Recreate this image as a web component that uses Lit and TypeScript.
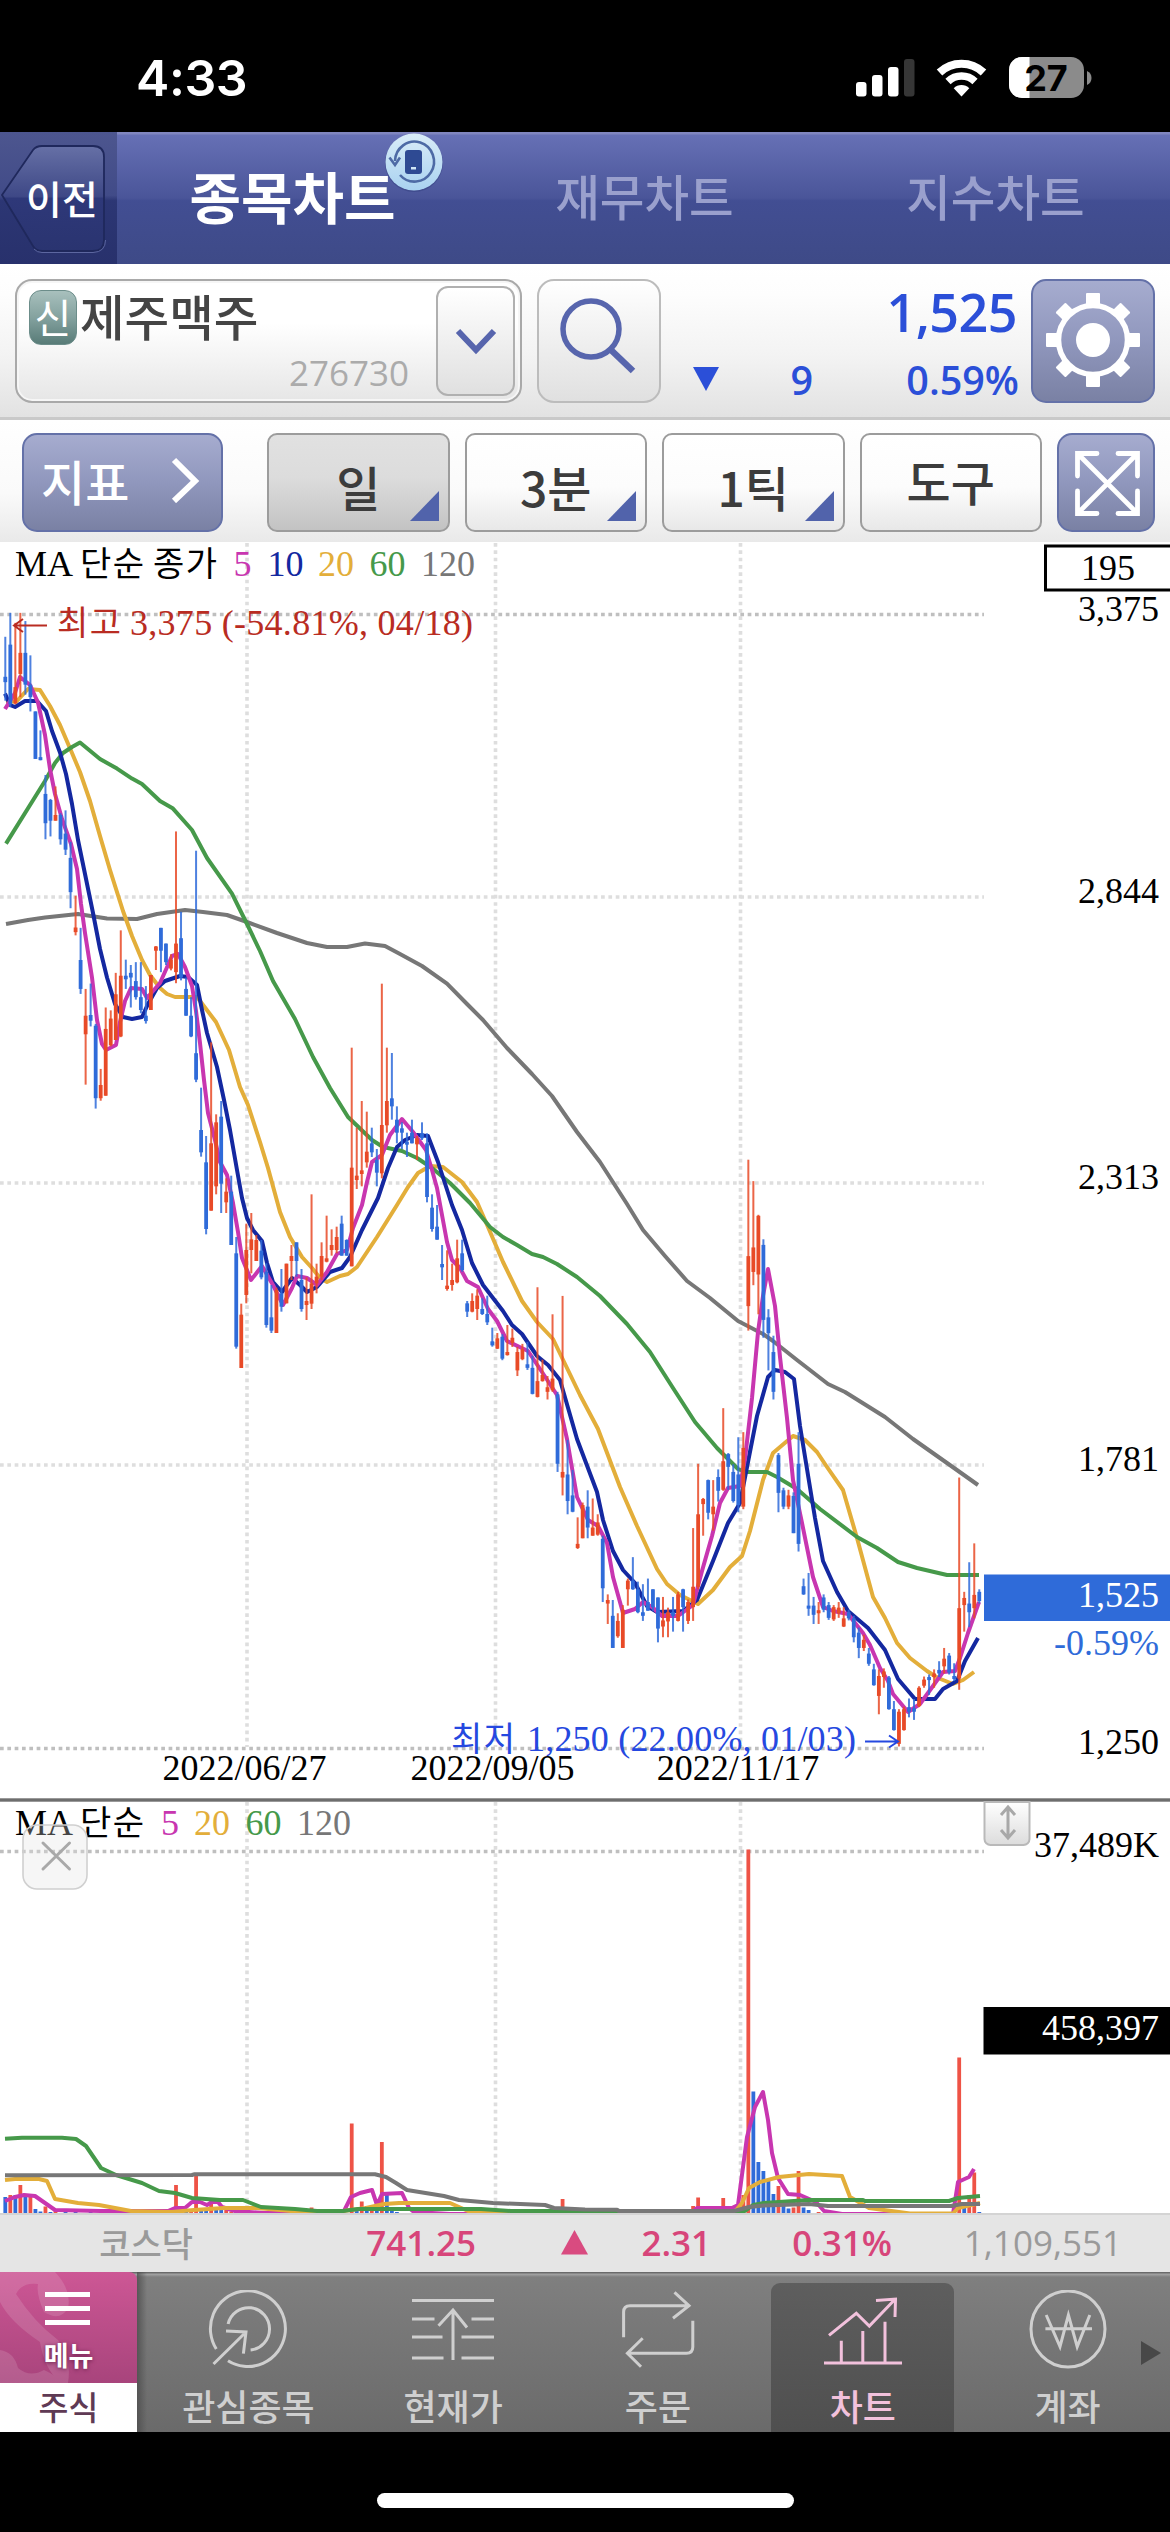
import { LitElement, html, svg, css } from "lit";
import { customElement } from "lit/decorators.js";

const RED = "#e84a27";
const BLUE = "#2f6bd9";
const COLORS = { m5: "#c836b0", m10: "#1428a0", m20: "#e3ae3a", m60: "#46994a", m120: "#777777" };

// One bar: direction (r = up, b = down), high, body top, body bottom, low.
// Bars come in three runs; each run has its own origin and unit.
const RUNS = [
  {
    top: 540,
    unit: 2.8,
    bars:
      "b271,383,398,450 b204,293,460,468 r232,412,458,460 r204,316,375,440 b227,316,405,433 b323,405,440,480 b480,480,613,613 b533,608,614,617 b658,711,793,838 b725,728,786,830 r690,770,786,786 b765,770,838,853 b757,822,867,882 b845,890,986,1031 r996,1085,1098,1107 b1086,1176,1257,1271 r1257,1332,1384,1525 b1242,1330,1346,1362 b1355,1360,1563,1592 r1481,1526,1563,1570 r1309,1369,1556,1556 r1317,1340,1415,1418 r1212,1272,1400,1400 r1093,1220,1390,1392 b1175,1220,1230,1257 b1190,1212,1225,1309 b1182,1235,1280,1287 b1182,1280,1316,1325 b1249,1332,1347,1354 r1218,1218,1316,1316 r1137,1138,1150,1204 b1086,1086,1150,1210 b1130,1130,1182,1190 r1160,1175,1200,1205 r816,1130,1210,1241 b1041,1115,1225,1233 b1225,1257,1332,1332 b1280,1332,1390,1392 b870,1437,1511,1518",
  },
  {
    top: 1000,
    unit: 3,
    bars:
      "b263,390,457,470 b408,487,687,703 r127,430,632,632 r343,367,559,583 b303,350,551,639 r535,575,607,639 b527,575,735,735 b711,760,1040,1046 r911,944,1104,1104 r671,750,885,910 r639,718,750,820 r705,720,783,783 b720,752,832,838 b790,815,975,983 b855,952,992,999 r863,870,999,999 b807,880,920,935 r791,791,910,910 r735,768,783,840 b727,727,783,830 b807,840,927,935 r832,903,915,960 r583,850,911,927 r791,830,850,880 r727,768,830,840 r647,775,785,787 r688,735,750,767 r680,711,750,760 b647,671,767,767 b718,720,767,767 r143,503,799,799 r383,527,540,567 r303,511,522,559 r335,455,487,503 b383,430,457,471 b447,480,518,559 r-49,375,520,535 r143,303,376,398 b159,295,319,359 b319,359,398,430 b367,385,398,447 b398,425,430,471 b359,398,430,430 r408,415,433,480 b367,400,415,420 b400,430,591,607 b583,623,687,695 b615,680,719,719 b735,792,802,840 r751,857,867,872 r791,840,855,872 r719,775,847,850 b719,760,810,815 b903,910,935,951 r880,903,935,937 r868,887,927,960 b895,927,942,945 b887,942,967,975 b983,1024,1036,1040 r999,1015,1046,1047",
  },
  {
    top: 1000,
    unit: 1.96,
    bars:
      "b655,660,703,706 r637,690,696,697 r644,662,672,680 r680,690,726,737 r674,685,704,706 b670,714,721,725 b697,721,772,773 r563,747,778,779 r705,735,747,748 r737,759,768,783 r616,742,765,768 b768,773,909,925 r580,925,936,971 b862,930,982,1008 b921,971,1003,1004 r1014,1066,1074,1076 r985,990,1055,1055 b961,993,1034,1055 r977,1034,1050,1050 r1008,1024,1048,1050 b1050,1056,1153,1180 r1165,1176,1183,1223 b1176,1207,1270,1270 r1202,1217,1247,1250 r1186,1195,1270,1270 r1134,1138,1155,1187 b1092,1138,1155,1156 b1140,1155,1200,1202 b1145,1200,1207,1217 b1134,1180,1197,1197 b1155,1155,1190,1197 b1171,1171,1232,1259 r1170,1216,1228,1249 r1191,1200,1218,1249 b1170,1200,1207,1238 r1160,1165,1217,1218 b1154,1155,1190,1238 r1175,1180,1217,1223 r1035,1150,1190,1217 r909,1008,1150,1155 r976,978,988,1050 b940,941,1005,1018 r941,993,1008,1040 b920,935,962,983 r800,904,960,962 b888,890,915,960 b910,925,982,985 b857,930,990,1004 r847,878,993,998 r313,502,600,648 r355,485,533,559 r421,423,538,616 b469,480,627,662 b606,622,653,726 b658,690,768,783 b888,892,966,1004 b956,961,993,998 r960,971,993,998 b965,972,1045,1045 b847,909,1066,1081 b1134,1149,1165,1166 b1123,1187,1193,1207 b1170,1187,1205,1223 r1180,1196,1202,1223 b1165,1171,1195,1200 b1180,1186,1211,1215 r1186,1190,1214,1217 r1180,1191,1202,1211 r1190,1212,1228,1229 b1195,1200,1212,1216 b1207,1212,1249,1259 b1230,1240,1270,1290 r1244,1254,1270,1276 b1270,1281,1301,1305 b1301,1312,1343,1344 r1312,1325,1364,1400 r1310,1316,1327,1348 b1325,1328,1390,1391 b1374,1390,1431,1432 r1390,1395,1458,1463 r1385,1390,1431,1432 b1369,1386,1395,1406 b1370,1388,1395,1411 r1345,1348,1384,1386 r1326,1332,1344,1348 b1322,1327,1333,1362 r1312,1320,1327,1348 b1296,1313,1320,1327 r1270,1291,1306,1320 b1280,1285,1318,1322 b1300,1325,1330,1335 r936,1192,1330,1352 r1160,1172,1186,1238 b1102,1183,1200,1229 r1065,1166,1192,1212 b1155,1160,1178,1183",
  },
];

const barX = (i: number) => 5.3 + i * 5.0205;

interface Candle { x: number; up: boolean; high: number; top: number; bottom: number; low: number }

const CANDLES: Candle[] = RUNS.flatMap((run) =>
  run.bars.split(" ").map((s) => {
    const [high, top, bottom, low] = s.slice(1).split(",").map((v) => run.top + Number(v) / run.unit);
    return { x: 0, up: s[0] === "r", high, top, bottom, low };
  })
).map((c, i) => ({ ...c, x: barX(i) }));

// Volume bars: index, direction, y of the bar's top. Base line is y = 2213.
const VOLUME_BASE = 2213;
const VOLUMES: [number, string, number][] = [
  [0, "b", 2197], [1, "r", 2195], [2, "b", 2195], [3, "r", 2185], [4, "b", 2197], [5, "r", 2197], [6, "b", 2209],
  [7, "b", 2211.5], [8, "r", 2206.5], [9, "b", 2212], [10, "r", 2210], [12, "b", 2211], [14, "b", 2211], [17, "b", 2211.5],
  [22, "r", 2211], [34, "r", 2185], [35, "b", 2209], [36, "b", 2210], [37, "r", 2210], [38, "r", 2176], [39, "b", 2210], [40, "b", 2209],
  [41, "r", 2201.5], [42, "b", 2210], [43, "b", 2209], [44, "r", 2209], [45, "r", 2211.5], [56, "r", 2212], [61, "r", 2207.5],
  [69, "r", 2123.5], [70, "b", 2209], [71, "r", 2201.5], [72, "b", 2206], [73, "r", 2206], [74, "b", 2210], [75, "r", 2142],
  [76, "b", 2194], [77, "b", 2209], [78, "b", 2212], [84, "b", 2210], [111, "r", 2199], [137, "r", 2206], [138, "r", 2197.5],
  [143, "r", 2198], [147, "r", 2195], [148, "r", 1849.5], [149, "b", 2091.5], [150, "b", 2162], [151, "b", 2171], [152, "b", 2180],
  [153, "b", 2194], [154, "r", 2186], [155, "b", 2206], [156, "b", 2208.5], [157, "r", 2207.5], [158, "r", 2171], [159, "b", 2207.5],
  [160, "b", 2210], [162, "r", 2212], [190, "r", 2057.5], [191, "b", 2202], [192, "r", 2195], [193, "r", 2172.5], [194, "b", 2212],
];

const PRICE_LINES: [string, string][] = [
  [COLORS.m120, "6,924 28,920 45,917.5 78,914 107,918.6 137,919 157,914 185,910 203,912 227,915 247,922 277,933 307,943 327,947 347,947 365,943.5 385,946 400,954 422,966 447,983.6 467,1004 483,1020 507,1048 532,1074 552,1096 577,1132 600,1162 627,1204 643,1230 665,1256 687,1281 710,1298 738,1321 763,1334 773,1341 797,1360 828,1384 845,1392 885,1417 913,1439 947,1463 978,1485"],
  [COLORS.m20, "6,702.5 17,701 28,689 40,690 50,706 60,725 72,753 80,772 90,801 100,836 110,870 123,911 132,936 142,960 150,975 160,988 167,994 175,997 197,997 216,1022 229,1050 240,1087 248,1105 260,1142 268,1168 280,1212 290,1237 302,1257 312,1268 320,1278 327,1282 340,1276 348,1274 357,1267 377,1237 397,1205 408,1187 418,1173 430,1166 443,1167 462,1182 477,1202 488,1227 503,1262 522,1301 537,1322 553,1339 580,1395 598,1429 620,1487 637,1526 657,1569 667,1584 680,1595 698,1604 713,1590 730,1567 742,1556 750,1531 763,1480 773,1453 793,1436 805,1440 817,1452 827,1467 843,1490 857,1538 873,1597 885,1618 897,1643 910,1658 927,1671 938,1678 953,1684 963,1680 974,1672"],
  [COLORS.m60, "6,843.6 45,781 55,763 63,753 72,747 80,742.5 100,759 117,768.6 132,778.6 142,784 160,801 173,808.6 192,830 207,858 232,893.6 247,924 260,951 273,981 295,1019 313,1057 330,1088 348,1117 372,1140 383,1147 402,1151 417,1158 432,1168 450,1183 470,1203 490,1227 503,1237 517,1245 532,1254 543,1257 557,1264 577,1277 600,1296 627,1324 650,1352 673,1388 695,1422 717,1448 738,1469 745,1472 767,1472 777,1477 797,1489 820,1509 857,1537 877,1548 898,1562 917,1568 947,1575 979,1575"],
  [COLORS.m10, "5,693.6 10,705 15,707 25,701 37,701 46,711 52,731 60,752.5 66,774 72,804 78,840 85,874 93,913 100,949 107,977.5 115,1004 123,1017 132,1019 142,1017 148,1004 157,988 165,981 180,976 188,977 197,985 202,1010 207,1033 217,1067 224,1100 230,1130 237,1170 242,1198 247,1218 253,1230 262,1241 267,1263 273,1282 282,1292 292,1278 300,1285 307,1292 317,1287 330,1272 342,1268 350,1257 362,1230 378,1198 388,1168 397,1147 405,1140 417,1135 428,1136 438,1162 452,1205 462,1230 472,1263 483,1285 503,1311 512,1325 522,1334 537,1356 548,1365 560,1380 577,1439 597,1492 603,1520 613,1551 623,1570 635,1583 647,1606 657,1612 683,1611 697,1600 713,1561 728,1523 740,1503 747,1467 757,1416 768,1377 775,1370 785,1372 794,1379 800,1426 807,1469 815,1518 823,1561 837,1592 848,1611 868,1628 885,1650 898,1679 915,1699 935,1699 943,1689 957,1681 965,1661 978,1638"],
  [COLORS.m5, "5,709 10,701 15,693 20,677 30,685 38,702.5 45,735 50,769 55,794 62,819 71,844 77,869 81,904 85,933 92,977.5 97,1020 102,1044 106,1050 116,1045 120,1022 125,1001 131,988 142,989 147,998 160,983 172,956 178,954 185,967 192,986 196,1011 200,1043 204,1080 208,1113 215,1140 220,1162 227,1175 233,1203 238,1232 242,1258 251,1280 262,1266 273,1285 283,1305 292,1288 297,1276 307,1278 317,1285 327,1272 337,1254 347,1250 353,1228 362,1205 367,1182 372,1162 382,1155 390,1135 402,1119 413,1132 426,1150 432,1170 437,1188 442,1215 447,1242 452,1260 460,1268 467,1281 478,1287 488,1309 497,1321 507,1341 528,1351 542,1372 557,1395 567,1439 577,1497 588,1520 598,1526 607,1543 613,1577 623,1613 635,1609 643,1602 652,1607 662,1616 678,1616 693,1605 702,1571 712,1536 720,1503 728,1488 740,1486 745,1459 752,1398 758,1332 763,1296 768,1269 775,1306 780,1357 787,1418 793,1480 802,1523 813,1577 823,1607 833,1611 848,1614 863,1633 870,1645 880,1668 888,1681 893,1694 908,1712 920,1704 933,1686 943,1672 955,1671 960,1658 968,1633 979,1602"],
];

const VOLUME_LINES: [string, string][] = [
  [COLORS.m5, "5,2201 15,2197 24,2195 35,2196 45,2203 55,2210 101,2211 168,2211 175,2208 185,2208 192,2202 200,2202 207,2205 212,2202 218,2202 222,2207 235,2211 265,2213 343,2213 351,2197 360,2193 372,2190 377,2205 382,2194 402,2193 409,2208 414,2212 450,2214 690,2214 697,2208 732,2208 738,2205 747,2137 755,2107 763,2092 768,2120 772,2153 778,2178 788,2194 800,2195 816,2202 824,2211 842,2214 953,2214 958,2182 969,2177 974,2169"],
  [COLORS.m20, "5,2180 15,2179 39,2179 47,2181 55,2199 78,2203 99,2205 131,2211 172,2212 194,2210 224,2208 257,2208 291,2211 343,2211 366,2208 384,2204 399,2203 450,2203 459,2207 468,2211 489,2213 734,2213 742,2203 749,2188 760,2182 779,2177 809,2174 842,2176 850,2197 869,2208 910,2213.5 953,2213.5 958,2208 980,2203"],
  [COLORS.m60, "5,2138.7 22,2137.7 62,2137.7 76,2139 86,2146 101,2168 116,2175 142,2183 159,2191 175,2193 192,2198 220,2200 243,2200 261,2207 295,2209 317,2211 343,2211 358,2209 481,2209 511,2211 745,2211 753,2205 764,2203 809,2200 863,2200 865,2201 949,2201 958,2198 980,2196"],
  [COLORS.m120, "5,2175.3 192,2175 194,2174.3 375,2174.3 386,2177 396,2183 407,2190 444,2196 459,2200 493,2203 545,2205 554,2208 585,2209.5 617,2209.7 619,2211 734,2211 749,2207 764,2205.5 809,2204 828,2206 951,2206 962,2204 980,2204"],
];

const TABS = ["종목차트", "재무차트", "지수차트"];

@customElement("price-chart")
class PriceChart extends LitElement {
  static styles = css`
    :host { display: block; height: 1671px; background: #fff; }
    svg { display: block; }
    text { font-family: "Liberation Serif", "Noto Sans CJK KR", serif; font-size: 36px; fill: #000; }
    .ko { font-family: "Noto Sans CJK KR", sans-serif; font-size: 34px; font-weight: 400; }
    .high { fill: #b92c22; }
    .low { fill: #2548e0; }
    .inverse { fill: #fff; }
    .grid { stroke: #dedede; stroke-width: 3.6; stroke-dasharray: 3.7 3.63; }
    .edge { stroke: #bfbfbf; }
    .ma { fill: none; stroke-width: 4; stroke-linejoin: round; }
  `;

  private legend(y: number, items: [string, string, number][]) {
    return items.map(([t, c, x]) => svg`<text x=${x} y=${y} style="fill:${c}">${t}</text>`);
  }

  render() {
    return html`<svg width="1170" height="1671" viewBox="0 542 1170 1671">
      <defs>
        <linearGradient id="knob" x1="0" y1="0" x2="0" y2="1">
          <stop offset="0" stop-color="#fff" /><stop offset="1" stop-color="#dcdcdc" />
        </linearGradient>
      </defs>
      ${[247, 495.5, 740.5].map((x) => svg`<line class="grid" x1=${x} x2=${x} y1="543" y2="1747" /><line class="grid" x1=${x} x2=${x} y1="1802" y2="2210" />`)}
      ${[897, 1183, 1465].map((y) => svg`<line class="grid" x1="0" x2="984" y1=${y} y2=${y} />`)}
      ${[614.5, 1748.5, 1851.5].map((y) => svg`<line class="grid edge" x1="0" x2="984" y1=${y} y2=${y} />`)}

      ${PRICE_LINES.map(([c, p]) => svg`<polyline class="ma" stroke=${c} points=${p} />`)}
      ${CANDLES.map((c) => svg`
        <rect x=${c.x - 1} y=${c.high} width="2" height=${Math.max(c.low - c.high, 1)} fill=${c.up ? RED : BLUE} opacity="0.85" />
        <rect x=${c.x - 1.9} y=${c.top} width="3.8" height=${Math.max(c.bottom - c.top, 3)} fill=${c.up ? RED : BLUE} />`)}

      <text x="15" y="576">MA</text>
      <text class="ko" x="80" y="576" textLength="64">단순</text>
      <text class="ko" x="153" y="576" textLength="64">종가</text>
      ${this.legend(576, [["5", COLORS.m5, 233.5], ["10", COLORS.m10, 267.5], ["20", COLORS.m20, 318], ["60", COLORS.m60, 369.5], ["120", COLORS.m120, 421]])}

      <path d="M47 625.5H14M23 619l-9 6.5 9 6.5" fill="none" stroke="#b92c22" stroke-width="2" />
      <text class="ko high" x="57" y="635" textLength="64">최고</text>
      <text class="high" x="130" y="635" textLength="343">3,375 (-54.81%, 04/18)</text>

      <text class="ko low" x="451" y="1750.5" textLength="64">최저</text>
      <text class="low" x="527" y="1750.5" textLength="329">1,250 (22.00%, 01/03)</text>
      <path d="M865 1741.500H898M889 1735.500l9 6-9 6" fill="none" stroke="#2548e0" stroke-width="2" />

      ${[["2022/06/27", 244.5], ["2022/09/05", 492.5], ["2022/11/17", 738]].map(([t, x]) => svg`<text x=${x} y="1780" text-anchor="middle">${t}</text>`)}
      ${[["3,375", 621], ["2,844", 903], ["2,313", 1189], ["1,781", 1471], ["1,250", 1754], ["37,489K", 1856.5]].map(([t, y]) => svg`<text x="1159" y=${y} text-anchor="end">${t}</text>`)}

      <rect x="1045.5" y="546" width="130" height="44" fill="#fff" stroke="#000" stroke-width="3" />
      <text x="1108" y="580" text-anchor="middle">195</text>
      <rect x="984" y="1574.5" width="186" height="46.5" fill="#2f6bd9" />
      <text class="inverse" x="1159" y="1607" text-anchor="end">1,525</text>
      <text x="1159" y="1655" text-anchor="end" style="fill:#2f6bd9">-0.59%</text>

      <rect x="0" y="1798.3" width="1170" height="3.4" fill="#6e6e6e" />
      <text x="15" y="1834.5">MA</text>
      <text class="ko" x="80" y="1834.5" textLength="64">단순</text>
      ${this.legend(1834.5, [["5", COLORS.m5, 161], ["20", COLORS.m20, 194], ["60", COLORS.m60, 245.5], ["120", COLORS.m120, 297]])}
      <rect x="23" y="1825" width="64" height="64" rx="14" fill="#e0e0e0" fill-opacity="0.3" stroke="#d0d0d0" stroke-width="1.6" />
      <path d="M43 1843l26.500 26M69.500 1843L43 1869" stroke="#a9a9a9" stroke-width="3" fill="none" stroke-linecap="round" />

      ${VOLUMES.map(([i, d, y]) => svg`<rect x=${barX(i) - 1.9} y=${y} width="3.8" height=${VOLUME_BASE - y} fill=${d === "r" ? "#ee5346" : BLUE} />`)}
      ${VOLUME_LINES.map(([c, p]) => svg`<polyline class="ma" stroke=${c} points=${p} />`)}

      <path d="M984.500 1802h45v37a6 6 0 0 1-6 6h-33a6 6 0 0 1-6-6z" fill="url(#knob)" stroke="#b9b9b9" stroke-width="2" />
      <path d="M1008 1807v30M1001 1815l7-8 7 8M1001 1830l7 8 7-8" fill="none" stroke="#a8a8a8" stroke-width="3" />
      <rect x="983.500" y="2007" width="186.500" height="47.500" fill="#000" />
      <text class="inverse" x="1159" y="2040" text-anchor="end">458,397</text>
    </svg>`;
  }
}

const NAV = [
  {
    label: "관심종목",
    icon: svg`<path d="M9.300 59A37.500 37.800 0 1 1 21 70.700M21.100 34A21 21.200 0 1 1 43.600 60M6.500 74L39 42M19 41L39 42L36.400 63.600" />`,
  },
  {
    label: "현재가",
    icon: svg`<path d="M0 10.500H82M0 29H22.500M59.500 29H82M0 47H30.500M49.500 47H82M0 68H31.500M49.500 68H82M41 20V70M26.500 35.700L41 20L55 37.500" />`,
  },
  {
    label: "주문",
    icon: svg`<path d="M6.600 47.300V22Q6.600 15.700 13 15.700H72M57.500 2.300L72 15.700L56 28.300M75.800 30.700V57Q75.800 63.300 69.500 63.300H10.400M25.700 48.300L10.400 63.300L24 76.700" />`,
  },
  {
    label: "차트",
    active: true,
    icon: svg`<path d="M2 73H80M19.300 50.700V73M40.800 41V73M63 31.700V73M7 45.300L34.300 23.300L47.300 36L73.300 9M54 10.500L73.500 9L73 27" />`,
  },
  {
    label: "계좌",
    icon: svg`<ellipse cx="41" cy="39" rx="37" ry="38" /><path d="M19.200 25L33 56.700L41.400 25L50.200 56.700L62.800 25M18.400 38.700H65" />`,
  },
];

@customElement("app-root")
class AppRoot extends LitElement {
  static styles = css`
    :host {
      display: block;
      width: 1170px;
      height: 2532px;
      overflow: hidden;
      background: #000;
      font-family: "Open Sans", "Noto Sans CJK KR", sans-serif;
      line-height: 1;
    }
    * { box-sizing: border-box; }
    svg { display: block; flex: none; }

    .status { height: 132px; display: flex; align-items: center; justify-content: space-between; padding: 24px 78px 0 136px; color: #fff; }
    .clock { font: 600 50px/1 "Inter", sans-serif; letter-spacing: -0.4px; }

    .header { height: 132px; display: grid; grid-template-columns: 117px repeat(3, 351px); background: linear-gradient(#8086bf 0, #8086bf 2px, #6670b5 3px, #4a5599 50%, #424e93 52%, #3e4a87 100%); font-family: "Noto Sans CJK KR", sans-serif; }
    .back { position: relative; background: linear-gradient(#4d568f 0, #414b88 48%, #2c3674 52%, #28316c); }
    .back-label { position: absolute; left: 26px; top: 46px; color: #fff; font-size: 39px; font-weight: 500; }
    .tab { position: relative; display: flex; justify-content: center; align-items: center; padding-bottom: 6px; font-size: 48.500px; font-weight: 500; color: #9aa0cd; padding-left: 2px; }
    .tab.on { color: #fff; font-size: 56px; font-weight: 700; padding-left: 0; }
    .badge { position: absolute; left: 266px; top: 0; }

    .quote { height: 156px; padding: 15px 15px 0; display: flex; background: linear-gradient(#fff 0, #fdfdfd 20%, #f3f3f3 60%, #e2e2e2 100%); border-bottom: 3px solid #c9c9c9; }
    .symbol { width: 507px; height: 124px; border: 2px solid #a9a9a9; border-radius: 17px; background: linear-gradient(#fff 0, #fff 35%, #e6e6e6 100%); box-shadow: inset 0 0 0 2px #f6f6f6; display: flex; padding: 5px; }
    .symbol-main { flex: 1; display: flex; flex-direction: column; justify-content: space-between; padding: 0 27px 5px 7px; }
    .symbol-name { display: flex; align-items: center; font-size: 48.500px; line-height: 62px; font-weight: 500; color: #444; }
    .credit { width: 48px; height: 55px; line-height: 53px; margin-right: 3px; border-radius: 12px; border: 1px solid #6c8d8a; background: linear-gradient(#a8c0bd, #84a29f 50%, #587b77); color: #fff; font-size: 40px; font-weight: 400; display: flex; align-items: center; justify-content: center; }
    .code { text-align: right; font-size: 35px; color: #ababab; font-weight: 500; line-height: 36px; }
    .drop { width: 79px; height: 110px; border: 2px solid #b0b0b0; border-radius: 12px; background: linear-gradient(#fff, #e0e0e0); display: flex; align-items: center; justify-content: center; }
    .search { width: 124px; height: 124px; margin-left: 15px; border: 2px solid #bcbcbc; border-radius: 17px; background: linear-gradient(#fff, #e0e0e0); }
    .prices { width: 370px; padding: 8px 12px 0 31px; color: #2b4fd8; }
    .last { text-align: right; font-size: 52px; font-weight: 600; line-height: 50px; padding-right: 2px; letter-spacing: -0.500px; }
    .delta { display: grid; grid-template-columns: 28px 93px 1fr; text-align: right; margin-top: 23px; font-size: 39.500px; font-weight: 600; line-height: 40px; letter-spacing: 0; }
    .blue { background: linear-gradient(#a6accf, #9097bd 50%, #7a81a4); border: 2px solid #6471a8; border-radius: 15px; }
    .gear { width: 124px; height: 124px; }

    .tools { height: 122px; padding: 13px 15px 0 22px; display: flex; background: linear-gradient(#fff, #fafafa 60%, #e9e9e9); font-family: "Noto Sans CJK KR", sans-serif; }
    .indicator { width: 201px; height: 99px; display: flex; align-items: center; justify-content: space-between; padding: 0 21px 6px 17px; color: #fff; font-size: 48px; font-weight: 500; }
    .periods { display: flex; gap: 15px; margin: 0 15px 0 44px; }
    .period { position: relative; width: 182.500px; height: 99px; border: 2px solid #9c9c9c; border-radius: 10px; background: linear-gradient(#fff 0, #fcfcfc 55%, #e8e8e8 100%); display: flex; align-items: center; justify-content: center; padding-top: 7px; font-size: 48px; font-weight: 500; color: #3c3c3c; }
    .period.on { background: linear-gradient(#e1e1e1 0, #dcdcdc 45%, #c3c3c3 100%); }
    .period.plain { padding-top: 0; padding-bottom: 5px; }
    .corner { position: absolute; right: 9px; bottom: 9px; }
    .expand { width: 98px; height: 99px; }

    .index { height: 59px; padding-bottom: 2px; display: grid; grid-template-columns: 193px 283px 112px 123px 181px 230px; align-items: center; text-align: right; background: #e5e5e5; border-top: 2px solid #d4d4d4; font-size: 35px; font-weight: 600; color: #d7457a; }
    .index .muted { color: #9a9a9a; font-weight: 500; }
    .index .name { font-family: "Noto Sans CJK KR", sans-serif; font-size: 34px; }
    .index svg { justify-self: end; }

    .nav { height: 160px; display: flex; background: linear-gradient(#6a6a6a 0, #6a6a6a 1px, #a5a5a5 2px, #7f7f7f 5px, #6a6a6a 100%); font-family: "Noto Sans CJK KR", sans-serif; position: relative; }
    .menu { width: 137px; display: flex; flex-direction: column; }
    .menu-top { height: 111px; position: relative; color: #fff; border-radius: 0 8px 0 0; overflow: hidden; background: linear-gradient(#cd5795, #a8447c); }
    .menu-label { position: absolute; left: 0; right: 0; top: 69px; text-align: center; font-size: 27px; font-weight: 700; text-shadow: 0 1px 4px #6b1f4b; }
    .menu-bottom { flex: 1; display: flex; align-items: center; justify-content: center; padding-bottom: 2px; background: #fff; color: #5f3a54; font-size: 32.500px; font-weight: 500; }
    .shade { width: 10px; background: linear-gradient(90deg, #4d4d4dcc, #77777700); }
    .items { flex: 1; display: flex; margin-left: -1px; margin-right: 0; }
    .item { width: 204.800px; padding-top: 11px; display: flex; justify-content: center; }
    .cell { width: 183px; border-radius: 9px 9px 0 0; padding-top: 7px; display: flex; flex-direction: column; align-items: center; color: #cfcfcf; font-size: 36px; font-weight: 500; }
    .cell svg { fill: none; stroke: currentColor; stroke-width: 3; }
    .cell span { margin-top: 17px; white-space: nowrap; }
    .cell.on { color: #f2c1dc; background: linear-gradient(#5e5e5e, #4f4f4f); }
    .more { position: absolute; right: 9px; top: 69px; }

    .home { height: 100px; display: flex; justify-content: center; padding-top: 61px; }
    .pill { width: 417px; height: 15px; border-radius: 8px; background: #fff; }
  `;

  render() {
    return html`
      <div class="status">
        <span class="clock">4:33</span>
        <svg width="236" height="42" viewBox="856 57 236 42">
          <g fill="#fff">
            <rect x="856" y="82" width="10.500" height="14.500" rx="3" />
            <rect x="872" y="75" width="10.500" height="21.500" rx="3" />
            <rect x="888" y="67" width="10.500" height="29.500" rx="3" />
          </g>
          <rect x="904" y="59" width="10.500" height="37.500" rx="3" fill="#363636" />
          <g fill="none" stroke="#fff">
            <path d="M939.500 72.500a32 32 0 0 1 44 0" stroke-width="8" />
            <path d="M948 81.500a19.500 19.500 0 0 1 27 0" stroke-width="7.500" />
          </g>
          <path d="M961.500 96.500l-7.800-8.200a11 11 0 0 1 15.600 0z" fill="#fff" />
          <clipPath id="cell"><rect x="1009" y="57" width="75" height="41" rx="13" /></clipPath>
          <g clip-path="url(#cell)">
            <rect x="1009" y="57" width="75" height="41" fill="#8b8b8b" />
            <rect x="1009" y="57" width="20.500" height="41" fill="#fff" />
          </g>
          <path d="M1087 71q4.500 2 4.500 7t-4.500 7z" fill="#8b8b8b" />
          <text x="1046" y="91" text-anchor="middle" font-family="Inter, sans-serif" font-weight="700" font-size="36" fill="#000">27</text>
        </svg>
      </div>

      <div class="header">
        <div class="back">
          <svg width="117" height="132" viewBox="0 0 117 132">
            <defs>
              <linearGradient id="bk" x1="0" y1="0" x2="0" y2="1">
                <stop offset="0" stop-color="#6670a6" /><stop offset=".48" stop-color="#3e4886" />
                <stop offset=".5" stop-color="#2e3879" /><stop offset="1" stop-color="#2a3470" />
              </linearGradient>
            </defs>
            <path d="M2 63L33 18Q36 14 42 14H93Q104 14 104 25V108Q104 119 93 119H42Q36 119 33 114Z" fill="url(#bk)" stroke="#1f285c" stroke-width="1.800" />
            <path d="M34 117Q37 120.500 42 120.500H93Q105.500 120 105.500 108" fill="none" stroke="#5c66a0" stroke-width="1" />
          </svg>
          <span class="back-label">이전</span>
        </div>
        ${TABS.map((t, i) => html`<div class="tab ${i === 0 ? "on" : ""}">${t}${i === 0
          ? html`<svg class="badge" width="64" height="64" viewBox="0 0 64 64">
              <defs><linearGradient id="bd" x1="0" y1="0" x2="0" y2="1"><stop offset="0" stop-color="#d9ecf8" /><stop offset="1" stop-color="#a9d2f0" /></linearGradient></defs>
              <circle cx="31" cy="31" r="29" fill="#33407f" opacity=".5" />
              <circle cx="31" cy="30" r="28.500" fill="url(#bd)" />
              <path d="M12 29A19.500 20 0 1 1 17 43" fill="none" stroke="#4d6aa5" stroke-width="2.600" />
              <path d="M6.500 25.500L12 33L17 25.500" fill="none" stroke="#4d6aa5" stroke-width="2.600" />
              <rect x="22" y="18" width="17" height="24" rx="3" fill="#2e4a93" />
              <rect x="28" y="35" width="5" height="2.500" fill="#cfe5f5" />
            </svg>`
          : null}</div>`)}
      </div>

      <div class="quote">
        <div class="symbol">
          <div class="symbol-main">
            <div class="symbol-name"><span class="credit">신</span>제주맥주</div>
            <div class="code">276730</div>
          </div>
          <div class="drop"><svg width="42" height="28" viewBox="0 0 42 28"><path d="M3 4L21 23L39 4" fill="none" stroke="#5765ad" stroke-width="6" /></svg></div>
        </div>
        <div class="search">
          <svg width="120" height="120" viewBox="539 281 120 120" fill="none" stroke="#5765ad">
            <circle cx="591" cy="329" r="28" stroke-width="5.500" /><path d="M611 350L633 371" stroke-width="6.500" />
          </svg>
        </div>
        <div class="prices">
          <div class="last">1,525</div>
          <div class="delta">
            <svg width="28" height="40" viewBox="0 0 28 40"><path d="M1 7H27L14 31Z" fill="#2b4fd8" /></svg>
            <span>9</span><span>0.59%</span>
          </div>
        </div>
        <div class="gear blue">
          <svg width="120" height="120" viewBox="-60 -59 120 120">
            <circle r="34.500" fill="none" stroke="#fff" stroke-width="5.500" />
            <circle r="17" fill="#fff" />
            ${[0, 45, 90, 135, 180, 225, 270, 315].map((a) => svg`<rect x="-7" y=${a % 90 ? -46 : -47} width="14" height="12" rx="1" fill="#fff" transform="rotate(${a})" />`)}
          </svg>
        </div>
      </div>

      <div class="tools">
        <div class="indicator blue"><span>지표</span><svg width="30" height="46" viewBox="0 0 30 46"><path d="M4 3L25 24L4 44" fill="none" stroke="#fff" stroke-width="6" /></svg></div>
        <div class="periods">
          ${["일", "3분", "1틱", "도구"].map((t, i) => html`<div class="period ${i === 0 ? "on" : ""} ${i === 3 ? "plain" : ""}">${t}${i < 3
            ? html`<svg class="corner" width="29" height="30" viewBox="0 0 29 30"><path d="M29 0V30H0Z" fill="#5163ab" /></svg>`
            : null}</div>`)}
        </div>
        <div class="expand blue">
          <svg width="94" height="95" viewBox="0 0 94 95" fill="none" stroke="#fff" stroke-width="4.800" stroke-linecap="round">
            <path d="M18.500 41V18.500H38M59 18.500H78.500V41M78.500 56V78.500H59M38 78.500H18.500V56M19 19L78 78M78 19L19 78" />
          </svg>
        </div>
      </div>

      <price-chart></price-chart>

      <div class="index">
        <span class="muted name">코스닥</span><span>741.25</span>
        <svg width="27" height="25" viewBox="0 0 27 25"><path d="M13.500 0L27 24.500H0Z" fill="#d94b80" /></svg>
        <span>2.31</span><span>0.31%</span><span class="muted">1,109,551</span>
      </div>

      <div class="nav">
        <div class="menu">
          <div class="menu-top">
            <svg width="137" height="111" viewBox="0 0 137 111">
              <g fill="#fff" opacity=".13">
                <path d="M0 0H55Q72 18 68 36Q60 50 44 40Q36 22 38 12Q22 10 16 22Q34 50 58 68Q72 86 68 111H60Q44 96 40 70Q10 50 0 30Z" />
                <path d="M0 78Q14 80 18 96Q30 106 44 98Q58 104 60 111H0Z" />
              </g>
              <path d="M45 22.500H90M45 36.500H90M45 50.500H90" stroke="#fff" stroke-width="5" />
            </svg>
            <span class="menu-label">메뉴</span>
          </div>
          <div class="menu-bottom">주식</div>
        </div>
        <div class="shade"></div>
        <div class="items">
          ${NAV.map((n) => html`<div class="item"><div class="cell ${n.active ? "on" : ""}">
            <svg width="82" height="80" viewBox="0 0 82 80">${n.icon}</svg><span>${n.label}</span></div></div>`)}
        </div>
        <svg class="more" width="20" height="24" viewBox="0 0 20 24"><path d="M0 0L20 12L0 24Z" fill="#484848" /></svg>
      </div>

      <div class="home"><div class="pill"></div></div>
    `;
  }
}
